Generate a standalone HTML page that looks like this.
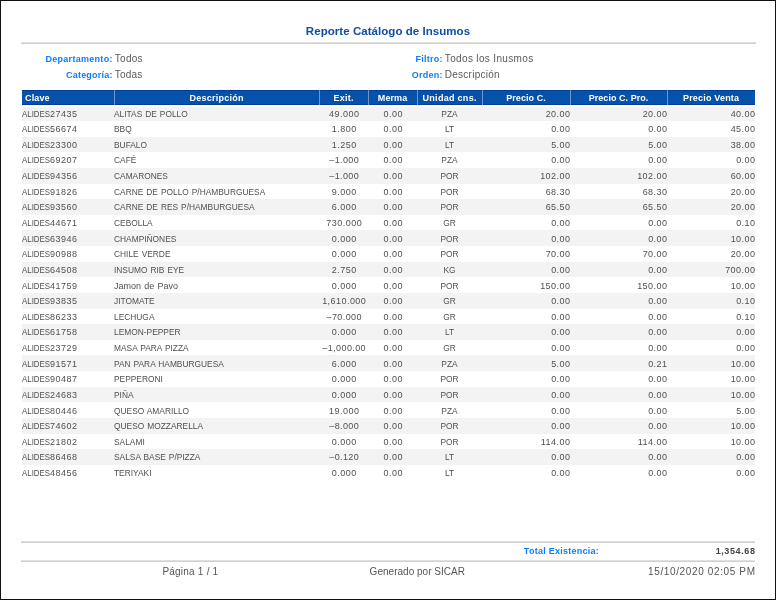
<!DOCTYPE html><html><head><meta charset="utf-8"><style>
*{margin:0;padding:0;box-sizing:border-box}
html,body{width:776px;height:600px;overflow:hidden;background:#fff}
body{position:relative;font-family:"Liberation Sans",sans-serif}
.frame{position:absolute;left:0;top:0;width:776px;height:600px;border:1px solid #111}
.a{position:absolute;white-space:pre;line-height:12px}
.ttl{font-weight:bold;font-size:11.5px;color:#0f4da6}
.lb{font-weight:bold;font-size:9px;color:#0d7dff}
.val{font-size:10px;color:#5a5a5a}
.rule{position:absolute;background:#d0d0d0;border-top:1px solid #e0e0e0}
.hdr{position:absolute;left:22px;top:90px;width:733px;height:15px;background:#0452a9;border-top:1px solid #023c9e;border-bottom:1px solid #023c9e}
.sep{position:absolute;top:90px;height:15px;width:1px;background:#6e95cc}
.hc{position:absolute;top:91px;height:15px;line-height:15px;font-size:9px;font-weight:bold;color:#fff;white-space:pre}
.row{position:absolute;left:22px;width:733px}
.g{background:#f3f3f3}
.c{position:absolute;font-size:9px;color:#505050;white-space:pre;line-height:12px}
.ft{font-size:10px;color:#555}
</style></head><body>
<div style="position:absolute;left:0;top:0;width:776px;height:600px;will-change:transform">
<div class="frame"></div>
<div class="a ttl" style="left:0;width:776px;text-align:center;top:25px;letter-spacing:0.05px">Reporte Catálogo de Insumos</div>
<div class="rule" style="left:21px;top:42px;width:735px;height:2px"></div>
<div class="a lb" style="right:663.31px;top:52.5px;letter-spacing:0.29px">Departamento:</div>
<div class="a val" style="left:114.8px;top:53px;letter-spacing:0.28px">Todos</div>
<div class="a lb" style="right:663.39px;top:69px;letter-spacing:0.21px">Categoría:</div>
<div class="a val" style="left:114.8px;top:69px;letter-spacing:0.20px">Todas</div>
<div class="a lb" style="right:333.35px;top:52.5px;letter-spacing:0.25px">Filtro:</div>
<div class="a val" style="left:444.8px;top:53px;letter-spacing:0.35px">Todos los Inusmos</div>
<div class="a lb" style="right:333.36px;top:69px;letter-spacing:0.24px">Orden:</div>
<div class="a val" style="left:444.8px;top:69px;letter-spacing:0.26px">Descripción</div>
<div class="hdr"></div>
<div class="sep" style="left:114px"></div>
<div class="sep" style="left:319px"></div>
<div class="sep" style="left:368px"></div>
<div class="sep" style="left:417px"></div>
<div class="sep" style="left:482px"></div>
<div class="sep" style="left:570px"></div>
<div class="sep" style="left:667px"></div>
<div class="hc" style="left:25px;letter-spacing:0.15px">Clave</div>
<div class="hc" style="left:114.13px;width:205px;text-align:center;letter-spacing:0.26px">Descripción</div>
<div class="hc" style="left:319.15px;width:49px;text-align:center;letter-spacing:0.30px">Exit.</div>
<div class="hc" style="left:368.04px;width:49px;text-align:center;letter-spacing:0.07px">Merma</div>
<div class="hc" style="left:417.14px;width:65px;text-align:center;letter-spacing:0.29px">Unidad cns.</div>
<div class="hc" style="left:482.03px;width:88px;text-align:center;letter-spacing:0.06px">Precio C.</div>
<div class="hc" style="left:570.02px;width:97px;text-align:center;letter-spacing:0.04px">Precio C. Pro.</div>
<div class="hc" style="left:667.09px;width:88px;text-align:center;letter-spacing:0.18px">Precio Venta</div>
<div class="row g" style="top:105.40px;height:15.63px"></div>
<div class="c" style="left:22.00px;top:107.60px"><span style="display:inline-block;transform:scaleX(0.875);transform-origin:0 0;margin-right:-4.00px">ALIDES</span><span style="letter-spacing:0.46px">27435</span></div>
<div class="c" style="left:114.00px;top:107.60px;transform-origin:0 0;transform:scaleX(0.93);word-spacing:0.70px;">ALITAS DE POLLO</div>
<div class="c" style="left:319.73px;width:49px;text-align:center;top:107.60px;letter-spacing:0.47px;">49.000</div>
<div class="c" style="left:368.73px;width:49px;text-align:center;top:107.60px;letter-spacing:0.45px;">0.00</div>
<div class="c" style="left:417.00px;width:65px;text-align:center;top:107.60px;transform:scaleX(0.93);">PZA</div>
<div class="c" style="right:205.54px;top:107.60px;letter-spacing:0.46px;">20.00</div>
<div class="c" style="right:108.54px;top:107.60px;letter-spacing:0.46px;">20.00</div>
<div class="c" style="right:20.54px;top:107.60px;letter-spacing:0.46px;">40.00</div>
<div class="c" style="left:22.00px;top:123.23px"><span style="display:inline-block;transform:scaleX(0.875);transform-origin:0 0;margin-right:-4.00px">ALIDES</span><span style="letter-spacing:0.46px">56674</span></div>
<div class="c" style="left:114.00px;top:123.23px;transform-origin:0 0;transform:scaleX(0.93);">BBQ</div>
<div class="c" style="left:319.73px;width:49px;text-align:center;top:123.23px;letter-spacing:0.46px;">1.800</div>
<div class="c" style="left:368.73px;width:49px;text-align:center;top:123.23px;letter-spacing:0.45px;">0.00</div>
<div class="c" style="left:417.00px;width:65px;text-align:center;top:123.23px;transform:scaleX(0.93);">LT</div>
<div class="c" style="right:205.55px;top:123.23px;letter-spacing:0.45px;">0.00</div>
<div class="c" style="right:108.55px;top:123.23px;letter-spacing:0.45px;">0.00</div>
<div class="c" style="right:20.54px;top:123.23px;letter-spacing:0.46px;">45.00</div>
<div class="row g" style="top:136.66px;height:15.63px"></div>
<div class="c" style="left:22.00px;top:138.86px"><span style="display:inline-block;transform:scaleX(0.875);transform-origin:0 0;margin-right:-4.00px">ALIDES</span><span style="letter-spacing:0.46px">23300</span></div>
<div class="c" style="left:114.00px;top:138.86px;transform-origin:0 0;transform:scaleX(0.93);">BUFALO</div>
<div class="c" style="left:319.73px;width:49px;text-align:center;top:138.86px;letter-spacing:0.46px;">1.250</div>
<div class="c" style="left:368.73px;width:49px;text-align:center;top:138.86px;letter-spacing:0.45px;">0.00</div>
<div class="c" style="left:417.00px;width:65px;text-align:center;top:138.86px;transform:scaleX(0.93);">LT</div>
<div class="c" style="right:205.55px;top:138.86px;letter-spacing:0.45px;">5.00</div>
<div class="c" style="right:108.55px;top:138.86px;letter-spacing:0.45px;">5.00</div>
<div class="c" style="right:20.54px;top:138.86px;letter-spacing:0.46px;">38.00</div>
<div class="c" style="left:22.00px;top:154.49px"><span style="display:inline-block;transform:scaleX(0.875);transform-origin:0 0;margin-right:-4.00px">ALIDES</span><span style="letter-spacing:0.46px">69207</span></div>
<div class="c" style="left:114.00px;top:154.49px;transform-origin:0 0;transform:scaleX(0.93);">CAFÉ</div>
<div class="c" style="left:319.69px;width:49px;text-align:center;top:154.49px;letter-spacing:0.38px;">–1.000</div>
<div class="c" style="left:368.73px;width:49px;text-align:center;top:154.49px;letter-spacing:0.45px;">0.00</div>
<div class="c" style="left:417.00px;width:65px;text-align:center;top:154.49px;transform:scaleX(0.93);">PZA</div>
<div class="c" style="right:205.55px;top:154.49px;letter-spacing:0.45px;">0.00</div>
<div class="c" style="right:108.55px;top:154.49px;letter-spacing:0.45px;">0.00</div>
<div class="c" style="right:20.55px;top:154.49px;letter-spacing:0.45px;">0.00</div>
<div class="row g" style="top:167.92px;height:15.63px"></div>
<div class="c" style="left:22.00px;top:170.12px"><span style="display:inline-block;transform:scaleX(0.875);transform-origin:0 0;margin-right:-4.00px">ALIDES</span><span style="letter-spacing:0.46px">94356</span></div>
<div class="c" style="left:114.00px;top:170.12px;transform-origin:0 0;transform:scaleX(0.93);">CAMARONES</div>
<div class="c" style="left:319.69px;width:49px;text-align:center;top:170.12px;letter-spacing:0.38px;">–1.000</div>
<div class="c" style="left:368.73px;width:49px;text-align:center;top:170.12px;letter-spacing:0.45px;">0.00</div>
<div class="c" style="left:417.00px;width:65px;text-align:center;top:170.12px;transform:scaleX(0.93);">POR</div>
<div class="c" style="right:205.53px;top:170.12px;letter-spacing:0.47px;">102.00</div>
<div class="c" style="right:108.53px;top:170.12px;letter-spacing:0.47px;">102.00</div>
<div class="c" style="right:20.54px;top:170.12px;letter-spacing:0.46px;">60.00</div>
<div class="c" style="left:22.00px;top:185.75px"><span style="display:inline-block;transform:scaleX(0.875);transform-origin:0 0;margin-right:-4.00px">ALIDES</span><span style="letter-spacing:0.46px">91826</span></div>
<div class="c" style="left:114.00px;top:185.75px;transform-origin:0 0;transform:scaleX(0.93);word-spacing:0.70px;">CARNE DE POLLO P/HAMBURGUESA</div>
<div class="c" style="left:319.73px;width:49px;text-align:center;top:185.75px;letter-spacing:0.46px;">9.000</div>
<div class="c" style="left:368.73px;width:49px;text-align:center;top:185.75px;letter-spacing:0.45px;">0.00</div>
<div class="c" style="left:417.00px;width:65px;text-align:center;top:185.75px;transform:scaleX(0.93);">POR</div>
<div class="c" style="right:205.54px;top:185.75px;letter-spacing:0.46px;">68.30</div>
<div class="c" style="right:108.54px;top:185.75px;letter-spacing:0.46px;">68.30</div>
<div class="c" style="right:20.54px;top:185.75px;letter-spacing:0.46px;">20.00</div>
<div class="row g" style="top:199.18px;height:15.63px"></div>
<div class="c" style="left:22.00px;top:201.38px"><span style="display:inline-block;transform:scaleX(0.875);transform-origin:0 0;margin-right:-4.00px">ALIDES</span><span style="letter-spacing:0.46px">93560</span></div>
<div class="c" style="left:114.00px;top:201.38px;transform-origin:0 0;transform:scaleX(0.93);word-spacing:0.70px;">CARNE DE RES P/HAMBURGUESA</div>
<div class="c" style="left:319.73px;width:49px;text-align:center;top:201.38px;letter-spacing:0.46px;">6.000</div>
<div class="c" style="left:368.73px;width:49px;text-align:center;top:201.38px;letter-spacing:0.45px;">0.00</div>
<div class="c" style="left:417.00px;width:65px;text-align:center;top:201.38px;transform:scaleX(0.93);">POR</div>
<div class="c" style="right:205.54px;top:201.38px;letter-spacing:0.46px;">65.50</div>
<div class="c" style="right:108.54px;top:201.38px;letter-spacing:0.46px;">65.50</div>
<div class="c" style="right:20.54px;top:201.38px;letter-spacing:0.46px;">20.00</div>
<div class="c" style="left:22.00px;top:217.01px"><span style="display:inline-block;transform:scaleX(0.875);transform-origin:0 0;margin-right:-4.00px">ALIDES</span><span style="letter-spacing:0.46px">44671</span></div>
<div class="c" style="left:114.00px;top:217.01px;transform-origin:0 0;transform:scaleX(0.93);">CEBOLLA</div>
<div class="c" style="left:319.74px;width:49px;text-align:center;top:217.01px;letter-spacing:0.47px;">730.000</div>
<div class="c" style="left:368.73px;width:49px;text-align:center;top:217.01px;letter-spacing:0.45px;">0.00</div>
<div class="c" style="left:417.00px;width:65px;text-align:center;top:217.01px;transform:scaleX(0.93);">GR</div>
<div class="c" style="right:205.55px;top:217.01px;letter-spacing:0.45px;">0.00</div>
<div class="c" style="right:108.55px;top:217.01px;letter-spacing:0.45px;">0.00</div>
<div class="c" style="right:20.55px;top:217.01px;letter-spacing:0.45px;">0.10</div>
<div class="row g" style="top:230.44px;height:15.63px"></div>
<div class="c" style="left:22.00px;top:232.64px"><span style="display:inline-block;transform:scaleX(0.875);transform-origin:0 0;margin-right:-4.00px">ALIDES</span><span style="letter-spacing:0.46px">63946</span></div>
<div class="c" style="left:114.00px;top:232.64px;transform-origin:0 0;transform:scaleX(0.93);">CHAMPIÑONES</div>
<div class="c" style="left:319.73px;width:49px;text-align:center;top:232.64px;letter-spacing:0.46px;">0.000</div>
<div class="c" style="left:368.73px;width:49px;text-align:center;top:232.64px;letter-spacing:0.45px;">0.00</div>
<div class="c" style="left:417.00px;width:65px;text-align:center;top:232.64px;transform:scaleX(0.93);">POR</div>
<div class="c" style="right:205.55px;top:232.64px;letter-spacing:0.45px;">0.00</div>
<div class="c" style="right:108.55px;top:232.64px;letter-spacing:0.45px;">0.00</div>
<div class="c" style="right:20.54px;top:232.64px;letter-spacing:0.46px;">10.00</div>
<div class="c" style="left:22.00px;top:248.27px"><span style="display:inline-block;transform:scaleX(0.875);transform-origin:0 0;margin-right:-4.00px">ALIDES</span><span style="letter-spacing:0.46px">90988</span></div>
<div class="c" style="left:114.00px;top:248.27px;transform-origin:0 0;transform:scaleX(0.93);word-spacing:0.70px;">CHILE VERDE</div>
<div class="c" style="left:319.73px;width:49px;text-align:center;top:248.27px;letter-spacing:0.46px;">0.000</div>
<div class="c" style="left:368.73px;width:49px;text-align:center;top:248.27px;letter-spacing:0.45px;">0.00</div>
<div class="c" style="left:417.00px;width:65px;text-align:center;top:248.27px;transform:scaleX(0.93);">POR</div>
<div class="c" style="right:205.54px;top:248.27px;letter-spacing:0.46px;">70.00</div>
<div class="c" style="right:108.54px;top:248.27px;letter-spacing:0.46px;">70.00</div>
<div class="c" style="right:20.54px;top:248.27px;letter-spacing:0.46px;">20.00</div>
<div class="row g" style="top:261.70px;height:15.63px"></div>
<div class="c" style="left:22.00px;top:263.90px"><span style="display:inline-block;transform:scaleX(0.875);transform-origin:0 0;margin-right:-4.00px">ALIDES</span><span style="letter-spacing:0.46px">64508</span></div>
<div class="c" style="left:114.00px;top:263.90px;transform-origin:0 0;transform:scaleX(0.93);word-spacing:0.70px;">INSUMO RIB EYE</div>
<div class="c" style="left:319.73px;width:49px;text-align:center;top:263.90px;letter-spacing:0.46px;">2.750</div>
<div class="c" style="left:368.73px;width:49px;text-align:center;top:263.90px;letter-spacing:0.45px;">0.00</div>
<div class="c" style="left:417.00px;width:65px;text-align:center;top:263.90px;transform:scaleX(0.93);">KG</div>
<div class="c" style="right:205.55px;top:263.90px;letter-spacing:0.45px;">0.00</div>
<div class="c" style="right:108.55px;top:263.90px;letter-spacing:0.45px;">0.00</div>
<div class="c" style="right:20.53px;top:263.90px;letter-spacing:0.47px;">700.00</div>
<div class="c" style="left:22.00px;top:279.53px"><span style="display:inline-block;transform:scaleX(0.875);transform-origin:0 0;margin-right:-4.00px">ALIDES</span><span style="letter-spacing:0.46px">41759</span></div>
<div class="c" style="left:114.00px;top:279.53px;transform-origin:0 0;word-spacing:0.70px;">Jamon de Pavo</div>
<div class="c" style="left:319.73px;width:49px;text-align:center;top:279.53px;letter-spacing:0.46px;">0.000</div>
<div class="c" style="left:368.73px;width:49px;text-align:center;top:279.53px;letter-spacing:0.45px;">0.00</div>
<div class="c" style="left:417.00px;width:65px;text-align:center;top:279.53px;transform:scaleX(0.93);">POR</div>
<div class="c" style="right:205.53px;top:279.53px;letter-spacing:0.47px;">150.00</div>
<div class="c" style="right:108.53px;top:279.53px;letter-spacing:0.47px;">150.00</div>
<div class="c" style="right:20.54px;top:279.53px;letter-spacing:0.46px;">10.00</div>
<div class="row g" style="top:292.96px;height:15.63px"></div>
<div class="c" style="left:22.00px;top:295.16px"><span style="display:inline-block;transform:scaleX(0.875);transform-origin:0 0;margin-right:-4.00px">ALIDES</span><span style="letter-spacing:0.46px">93835</span></div>
<div class="c" style="left:114.00px;top:295.16px;transform-origin:0 0;transform:scaleX(0.93);">JITOMATE</div>
<div class="c" style="left:319.73px;width:49px;text-align:center;top:295.16px;letter-spacing:0.46px;">1,610.000</div>
<div class="c" style="left:368.73px;width:49px;text-align:center;top:295.16px;letter-spacing:0.45px;">0.00</div>
<div class="c" style="left:417.00px;width:65px;text-align:center;top:295.16px;transform:scaleX(0.93);">GR</div>
<div class="c" style="right:205.55px;top:295.16px;letter-spacing:0.45px;">0.00</div>
<div class="c" style="right:108.55px;top:295.16px;letter-spacing:0.45px;">0.00</div>
<div class="c" style="right:20.55px;top:295.16px;letter-spacing:0.45px;">0.10</div>
<div class="c" style="left:22.00px;top:310.79px"><span style="display:inline-block;transform:scaleX(0.875);transform-origin:0 0;margin-right:-4.00px">ALIDES</span><span style="letter-spacing:0.46px">86233</span></div>
<div class="c" style="left:114.00px;top:310.79px;transform-origin:0 0;transform:scaleX(0.93);">LECHUGA</div>
<div class="c" style="left:319.70px;width:49px;text-align:center;top:310.79px;letter-spacing:0.40px;">–70.000</div>
<div class="c" style="left:368.73px;width:49px;text-align:center;top:310.79px;letter-spacing:0.45px;">0.00</div>
<div class="c" style="left:417.00px;width:65px;text-align:center;top:310.79px;transform:scaleX(0.93);">GR</div>
<div class="c" style="right:205.55px;top:310.79px;letter-spacing:0.45px;">0.00</div>
<div class="c" style="right:108.55px;top:310.79px;letter-spacing:0.45px;">0.00</div>
<div class="c" style="right:20.55px;top:310.79px;letter-spacing:0.45px;">0.10</div>
<div class="row g" style="top:324.22px;height:15.63px"></div>
<div class="c" style="left:22.00px;top:326.42px"><span style="display:inline-block;transform:scaleX(0.875);transform-origin:0 0;margin-right:-4.00px">ALIDES</span><span style="letter-spacing:0.46px">61758</span></div>
<div class="c" style="left:114.00px;top:326.42px;transform-origin:0 0;transform:scaleX(0.93);">LEMON-PEPPER</div>
<div class="c" style="left:319.73px;width:49px;text-align:center;top:326.42px;letter-spacing:0.46px;">0.000</div>
<div class="c" style="left:368.73px;width:49px;text-align:center;top:326.42px;letter-spacing:0.45px;">0.00</div>
<div class="c" style="left:417.00px;width:65px;text-align:center;top:326.42px;transform:scaleX(0.93);">LT</div>
<div class="c" style="right:205.55px;top:326.42px;letter-spacing:0.45px;">0.00</div>
<div class="c" style="right:108.55px;top:326.42px;letter-spacing:0.45px;">0.00</div>
<div class="c" style="right:20.55px;top:326.42px;letter-spacing:0.45px;">0.00</div>
<div class="c" style="left:22.00px;top:342.05px"><span style="display:inline-block;transform:scaleX(0.875);transform-origin:0 0;margin-right:-4.00px">ALIDES</span><span style="letter-spacing:0.46px">23729</span></div>
<div class="c" style="left:114.00px;top:342.05px;transform-origin:0 0;transform:scaleX(0.93);word-spacing:0.70px;">MASA PARA PIZZA</div>
<div class="c" style="left:319.70px;width:49px;text-align:center;top:342.05px;letter-spacing:0.40px;">–1,000.00</div>
<div class="c" style="left:368.73px;width:49px;text-align:center;top:342.05px;letter-spacing:0.45px;">0.00</div>
<div class="c" style="left:417.00px;width:65px;text-align:center;top:342.05px;transform:scaleX(0.93);">GR</div>
<div class="c" style="right:205.55px;top:342.05px;letter-spacing:0.45px;">0.00</div>
<div class="c" style="right:108.55px;top:342.05px;letter-spacing:0.45px;">0.00</div>
<div class="c" style="right:20.55px;top:342.05px;letter-spacing:0.45px;">0.00</div>
<div class="row g" style="top:355.48px;height:15.63px"></div>
<div class="c" style="left:22.00px;top:357.68px"><span style="display:inline-block;transform:scaleX(0.875);transform-origin:0 0;margin-right:-4.00px">ALIDES</span><span style="letter-spacing:0.46px">91571</span></div>
<div class="c" style="left:114.00px;top:357.68px;transform-origin:0 0;transform:scaleX(0.93);word-spacing:0.70px;">PAN PARA HAMBURGUESA</div>
<div class="c" style="left:319.73px;width:49px;text-align:center;top:357.68px;letter-spacing:0.46px;">6.000</div>
<div class="c" style="left:368.73px;width:49px;text-align:center;top:357.68px;letter-spacing:0.45px;">0.00</div>
<div class="c" style="left:417.00px;width:65px;text-align:center;top:357.68px;transform:scaleX(0.93);">PZA</div>
<div class="c" style="right:205.55px;top:357.68px;letter-spacing:0.45px;">5.00</div>
<div class="c" style="right:108.55px;top:357.68px;letter-spacing:0.45px;">0.21</div>
<div class="c" style="right:20.54px;top:357.68px;letter-spacing:0.46px;">10.00</div>
<div class="c" style="left:22.00px;top:373.31px"><span style="display:inline-block;transform:scaleX(0.875);transform-origin:0 0;margin-right:-4.00px">ALIDES</span><span style="letter-spacing:0.46px">90487</span></div>
<div class="c" style="left:114.00px;top:373.31px;transform-origin:0 0;transform:scaleX(0.93);">PEPPERONI</div>
<div class="c" style="left:319.73px;width:49px;text-align:center;top:373.31px;letter-spacing:0.46px;">0.000</div>
<div class="c" style="left:368.73px;width:49px;text-align:center;top:373.31px;letter-spacing:0.45px;">0.00</div>
<div class="c" style="left:417.00px;width:65px;text-align:center;top:373.31px;transform:scaleX(0.93);">POR</div>
<div class="c" style="right:205.55px;top:373.31px;letter-spacing:0.45px;">0.00</div>
<div class="c" style="right:108.55px;top:373.31px;letter-spacing:0.45px;">0.00</div>
<div class="c" style="right:20.54px;top:373.31px;letter-spacing:0.46px;">10.00</div>
<div class="row g" style="top:386.74px;height:15.63px"></div>
<div class="c" style="left:22.00px;top:388.94px"><span style="display:inline-block;transform:scaleX(0.875);transform-origin:0 0;margin-right:-4.00px">ALIDES</span><span style="letter-spacing:0.46px">24683</span></div>
<div class="c" style="left:114.00px;top:388.94px;transform-origin:0 0;transform:scaleX(0.93);">PIÑA</div>
<div class="c" style="left:319.73px;width:49px;text-align:center;top:388.94px;letter-spacing:0.46px;">0.000</div>
<div class="c" style="left:368.73px;width:49px;text-align:center;top:388.94px;letter-spacing:0.45px;">0.00</div>
<div class="c" style="left:417.00px;width:65px;text-align:center;top:388.94px;transform:scaleX(0.93);">POR</div>
<div class="c" style="right:205.55px;top:388.94px;letter-spacing:0.45px;">0.00</div>
<div class="c" style="right:108.55px;top:388.94px;letter-spacing:0.45px;">0.00</div>
<div class="c" style="right:20.54px;top:388.94px;letter-spacing:0.46px;">10.00</div>
<div class="c" style="left:22.00px;top:404.57px"><span style="display:inline-block;transform:scaleX(0.875);transform-origin:0 0;margin-right:-4.00px">ALIDES</span><span style="letter-spacing:0.46px">80446</span></div>
<div class="c" style="left:114.00px;top:404.57px;transform-origin:0 0;transform:scaleX(0.93);word-spacing:0.70px;">QUESO AMARILLO</div>
<div class="c" style="left:319.73px;width:49px;text-align:center;top:404.57px;letter-spacing:0.47px;">19.000</div>
<div class="c" style="left:368.73px;width:49px;text-align:center;top:404.57px;letter-spacing:0.45px;">0.00</div>
<div class="c" style="left:417.00px;width:65px;text-align:center;top:404.57px;transform:scaleX(0.93);">PZA</div>
<div class="c" style="right:205.55px;top:404.57px;letter-spacing:0.45px;">0.00</div>
<div class="c" style="right:108.55px;top:404.57px;letter-spacing:0.45px;">0.00</div>
<div class="c" style="right:20.55px;top:404.57px;letter-spacing:0.45px;">5.00</div>
<div class="row g" style="top:418.00px;height:15.63px"></div>
<div class="c" style="left:22.00px;top:420.20px"><span style="display:inline-block;transform:scaleX(0.875);transform-origin:0 0;margin-right:-4.00px">ALIDES</span><span style="letter-spacing:0.46px">74602</span></div>
<div class="c" style="left:114.00px;top:420.20px;transform-origin:0 0;transform:scaleX(0.93);word-spacing:0.70px;">QUESO MOZZARELLA</div>
<div class="c" style="left:319.69px;width:49px;text-align:center;top:420.20px;letter-spacing:0.38px;">–8.000</div>
<div class="c" style="left:368.73px;width:49px;text-align:center;top:420.20px;letter-spacing:0.45px;">0.00</div>
<div class="c" style="left:417.00px;width:65px;text-align:center;top:420.20px;transform:scaleX(0.93);">POR</div>
<div class="c" style="right:205.55px;top:420.20px;letter-spacing:0.45px;">0.00</div>
<div class="c" style="right:108.55px;top:420.20px;letter-spacing:0.45px;">0.00</div>
<div class="c" style="right:20.54px;top:420.20px;letter-spacing:0.46px;">10.00</div>
<div class="c" style="left:22.00px;top:435.83px"><span style="display:inline-block;transform:scaleX(0.875);transform-origin:0 0;margin-right:-4.00px">ALIDES</span><span style="letter-spacing:0.46px">21802</span></div>
<div class="c" style="left:114.00px;top:435.83px;transform-origin:0 0;transform:scaleX(0.93);">SALAMI</div>
<div class="c" style="left:319.73px;width:49px;text-align:center;top:435.83px;letter-spacing:0.46px;">0.000</div>
<div class="c" style="left:368.73px;width:49px;text-align:center;top:435.83px;letter-spacing:0.45px;">0.00</div>
<div class="c" style="left:417.00px;width:65px;text-align:center;top:435.83px;transform:scaleX(0.93);">POR</div>
<div class="c" style="right:205.53px;top:435.83px;letter-spacing:0.47px;">114.00</div>
<div class="c" style="right:108.53px;top:435.83px;letter-spacing:0.47px;">114.00</div>
<div class="c" style="right:20.54px;top:435.83px;letter-spacing:0.46px;">10.00</div>
<div class="row g" style="top:449.26px;height:15.63px"></div>
<div class="c" style="left:22.00px;top:451.46px"><span style="display:inline-block;transform:scaleX(0.875);transform-origin:0 0;margin-right:-4.00px">ALIDES</span><span style="letter-spacing:0.46px">86468</span></div>
<div class="c" style="left:114.00px;top:451.46px;transform-origin:0 0;transform:scaleX(0.93);word-spacing:0.70px;">SALSA BASE P/PIZZA</div>
<div class="c" style="left:319.69px;width:49px;text-align:center;top:451.46px;letter-spacing:0.38px;">–0.120</div>
<div class="c" style="left:368.73px;width:49px;text-align:center;top:451.46px;letter-spacing:0.45px;">0.00</div>
<div class="c" style="left:417.00px;width:65px;text-align:center;top:451.46px;transform:scaleX(0.93);">LT</div>
<div class="c" style="right:205.55px;top:451.46px;letter-spacing:0.45px;">0.00</div>
<div class="c" style="right:108.55px;top:451.46px;letter-spacing:0.45px;">0.00</div>
<div class="c" style="right:20.55px;top:451.46px;letter-spacing:0.45px;">0.00</div>
<div class="c" style="left:22.00px;top:467.09px"><span style="display:inline-block;transform:scaleX(0.875);transform-origin:0 0;margin-right:-4.00px">ALIDES</span><span style="letter-spacing:0.46px">48456</span></div>
<div class="c" style="left:114.00px;top:467.09px;transform-origin:0 0;transform:scaleX(0.93);">TERIYAKI</div>
<div class="c" style="left:319.73px;width:49px;text-align:center;top:467.09px;letter-spacing:0.46px;">0.000</div>
<div class="c" style="left:368.73px;width:49px;text-align:center;top:467.09px;letter-spacing:0.45px;">0.00</div>
<div class="c" style="left:417.00px;width:65px;text-align:center;top:467.09px;transform:scaleX(0.93);">LT</div>
<div class="c" style="right:205.55px;top:467.09px;letter-spacing:0.45px;">0.00</div>
<div class="c" style="right:108.55px;top:467.09px;letter-spacing:0.45px;">0.00</div>
<div class="c" style="right:20.55px;top:467.09px;letter-spacing:0.45px;">0.00</div>
<div style="position:absolute;left:22px;top:105px;width:733px;height:2px;background:#fff"></div>
<div class="rule" style="left:21px;top:541px;width:734px;height:2px"></div>
<div class="rule" style="left:21px;top:560px;width:734px;height:2px"></div>
<div class="a lb" style="left:523.8px;top:545px;letter-spacing:0.26px">Total Existencia:</div>
<div class="a" style="right:20.38px;top:545px;font-size:9px;font-weight:bold;color:#444;letter-spacing:0.62px">1,354.68</div>
<div class="a ft" style="left:162.4px;top:566px;letter-spacing:0.22px">Página 1 / 1</div>
<div class="a ft" style="left:369.6px;top:566px;letter-spacing:0.02px">Generado por SICAR</div>
<div class="a ft" style="right:20.37px;top:566px;letter-spacing:0.63px">15/10/2020 02:05 PM</div>
</div></body></html>
